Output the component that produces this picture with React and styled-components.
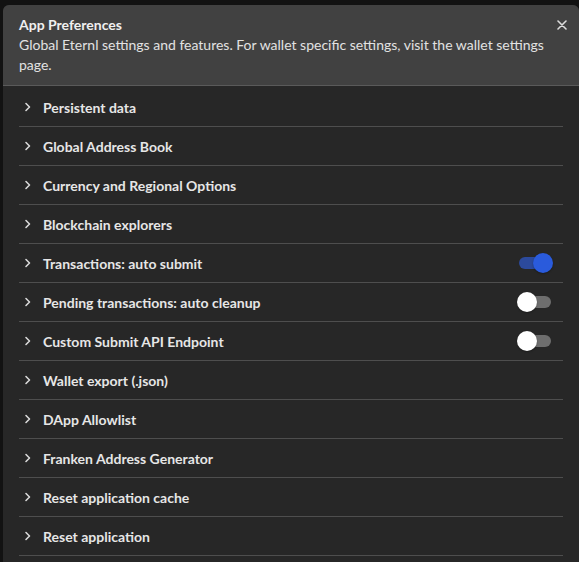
import React, { useState } from 'react';
import styled, { createGlobalStyle } from 'styled-components';

const GlobalStyle = createGlobalStyle`
  html, body {
    margin: 0;
    padding: 0;
    background: #121212;
    height: 100%;
    overflow: hidden;
  }
  body {
    font-family: Lato, "Noto Sans", sans-serif;
  }
`;

const items = [
  { label: 'Persistent data' },
  { label: 'Global Address Book' },
  { label: 'Currency and Regional Options' },
  { label: 'Blockchain explorers' },
  { label: 'Transactions: auto submit', toggle: true, on: true },
  { label: 'Pending transactions: auto cleanup', toggle: true, on: false },
  { label: 'Custom Submit API Endpoint', toggle: true, on: false },
  { label: 'Wallet export (.json)' },
  { label: 'DApp Allowlist' },
  { label: 'Franken Address Generator' },
  { label: 'Reset application cache' },
  { label: 'Reset application' },
];

const Chevron = () => (
  <svg width="10" height="10" viewBox="0 0 10 10" fill="none">
    <path d="M3 1.5 L6.5 5 L3 8.5" stroke="#d8d8d8" strokeWidth="1.6" strokeLinecap="round" strokeLinejoin="round" />
  </svg>
);

const CloseIcon = () => (
  <svg width="10" height="10" viewBox="0 0 10 10">
    <path d="M1 1 L9 9 M9 1 L1 9" stroke="#dcdcdc" strokeWidth="1.6" strokeLinecap="round" />
  </svg>
);

const Toggle = ({ on, onClick }) => (
  <Track $on={on} onClick={onClick}>
    <Knob $on={on} />
  </Track>
);

const App = () => {
  const [state, setState] = useState(items.map((i) => !!i.on));

  return (
    <>
      <GlobalStyle />
      <Page>
        <Dialog>
          <Header>
            <Title>App Preferences</Title>
            <Desc>
              Global Eternl settings and features. For wallet specific settings, visit the wallet settings page.
            </Desc>
            <CloseButton aria-label="close">
              <CloseIcon />
            </CloseButton>
          </Header>
          <Body>
            {items.map((item, i) => (
              <Row key={item.label}>
                <ChevronBox>
                  <Chevron />
                </ChevronBox>
                <Label>{item.label}</Label>
                {item.toggle && (
                  <Toggle
                    on={state[i]}
                    onClick={() => setState((s) => s.map((v, j) => (j === i ? !v : v)))}
                  />
                )}
              </Row>
            ))}
          </Body>
        </Dialog>
      </Page>
    </>
  );
};

const Page = styled.div`
  padding: 5px 0 0 3px;
  height: 562px;
  box-sizing: border-box;
`;

const Dialog = styled.div`
  background: #272727;
  border-radius: 6px 6px 0 0;
  height: 100%;
  overflow: hidden;
`;

const Header = styled.div`
  position: relative;
  background: #414141;
  border-bottom: 1px solid #5a5a5a;
  padding: 10px 30px 10px 16px;
  color: #e6e6e6;
`;

const Title = styled.div`
  font-size: 14px;
  font-weight: 700;
  line-height: 20px;
  color: #f0f0f0;
`;

const Desc = styled.div`
  font-size: 14px;
  line-height: 20px;
  color: #e2e2e2;
`;

const CloseButton = styled.button`
  position: absolute;
  top: 13px;
  right: 10px;
  width: 14px;
  height: 14px;
  padding: 0;
  border: none;
  background: none;
  display: flex;
  align-items: center;
  justify-content: center;
  cursor: pointer;
`;

const Body = styled.div`
  padding: 2px 16px 0;
`;

const Row = styled.div`
  display: flex;
  align-items: center;
  height: 38px;
  border-bottom: 1px solid #4e4e4e;
  padding: 0 12px 0 4px;
`;

const ChevronBox = styled.div`
  width: 20px;
  display: flex;
  align-items: center;
`;

const Label = styled.div`
  flex: 1;
  font-size: 14px;
  font-weight: 700;
  color: #e6e6e6;
`;

const Track = styled.div`
  position: relative;
  width: 32px;
  height: 12px;
  border-radius: 6px;
  background: ${(p) => (p.$on ? '#2c4a9c' : '#6e6e6e')};
  cursor: pointer;
`;

const Knob = styled.div`
  position: absolute;
  top: -4px;
  left: ${(p) => (p.$on ? '14px' : '-2px')};
  width: 20px;
  height: 20px;
  border-radius: 50%;
  background: ${(p) => (p.$on ? '#2a5bdc' : '#ffffff')};
  box-shadow: 0 1px 2px rgba(0, 0, 0, 0.3);
`;

export default App;
